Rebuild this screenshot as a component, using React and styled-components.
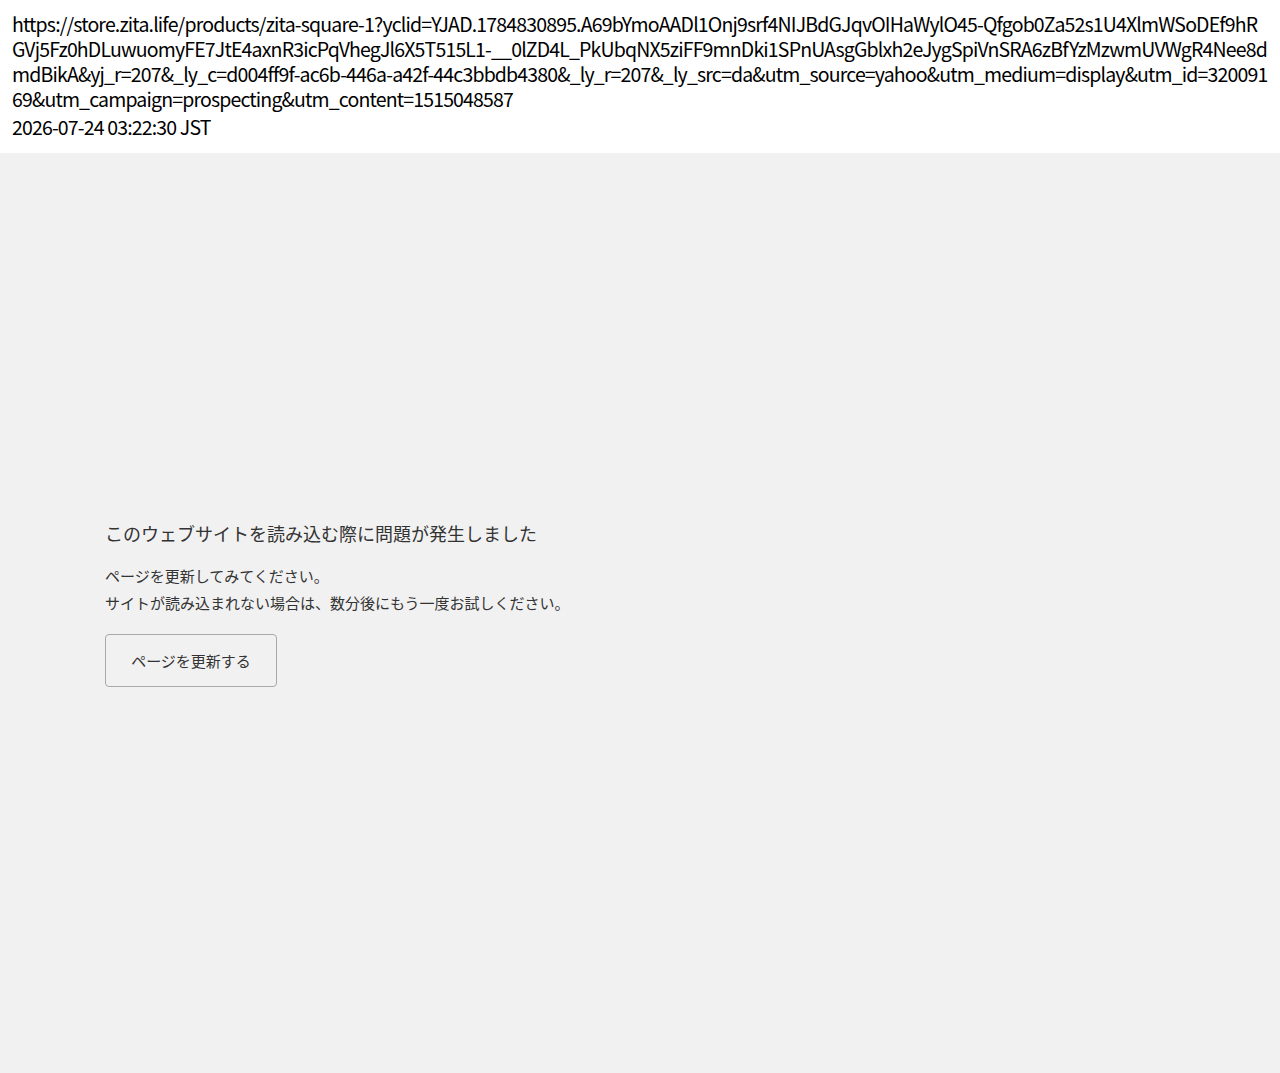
import React from "react";
import styled, { createGlobalStyle } from "styled-components";

const GlobalStyle = createGlobalStyle`
  html, body {
    margin: 0;
    padding: 0;
    background: #f1f1f1;
    font-family: "Noto Sans CJK JP", "Noto Sans", sans-serif;
  }
`;

const Page = styled.div`
  min-height: 1073px;
  display: flex;
  flex-direction: column;
`;

const Header = styled.header`
  background: #fff;
  padding: 11px 12px 14px;
  color: #000;
  font-size: 19.5px;
  line-height: 25px;
  letter-spacing: -0.84px;
`;

const Url = styled.div`
  word-break: break-all;
  margin-bottom: 3px;
`;

const Stamp = styled.div``;

const Main = styled.main`
  flex: 1;
  padding: 367px 105px 0;
  color: #333;
`;

const Title = styled.h1`
  margin: 0 0 16px;
  font-size: 18px;
  font-weight: 400;
  line-height: 26px;
`;

const Message = styled.p`
  margin: 0 0 18px;
  font-size: 15px;
  line-height: 27px;
`;

const ReloadButton = styled.button`
  width: 172px;
  height: 53px;
  border: 1px solid #a8a8a8;
  border-radius: 4px;
  background: #f1f1f1;
  color: #333;
  font-family: inherit;
  font-size: 15px;
  cursor: pointer;
`;

export default function App() {
  return (
    <Page>
      <GlobalStyle />
      <Header>
        <Url>
          https://store.zita.life/products/zita-square-1?yclid=YJAD.1784830895.A69bYmoAADl1Onj9srf4NIJBdGJqvOIHaWylO45-Qfgob0Za52s1U4XlmWSoDEf9hRGVj5Fz0hDLuwuomyFE7JtE4axnR3icPqVhegJl6X5T515L1-__0lZD4L_PkUbqNX5ziFF9mnDki1SPnUAsgGblxh2eJygSpiVnSRA6zBfYzMzwmUVWgR4Nee8dmdBikA&yj_r=207&_ly_c=d004ff9f-ac6b-446a-a42f-44c3bbdb4380&_ly_r=207&_ly_src=da&utm_source=yahoo&utm_medium=display&utm_id=32009169&utm_campaign=prospecting&utm_content=1515048587
        </Url>
        <Stamp>2026-07-24 03:22:30 JST</Stamp>
      </Header>
      <Main>
        <Title>このウェブサイトを読み込む際に問題が発生しました</Title>
        <Message>
          ページを更新してみてください。
          <br />
          サイトが読み込まれない場合は、数分後にもう一度お試しください。
        </Message>
        <ReloadButton>ページを更新する</ReloadButton>
      </Main>
    </Page>
  );
}
